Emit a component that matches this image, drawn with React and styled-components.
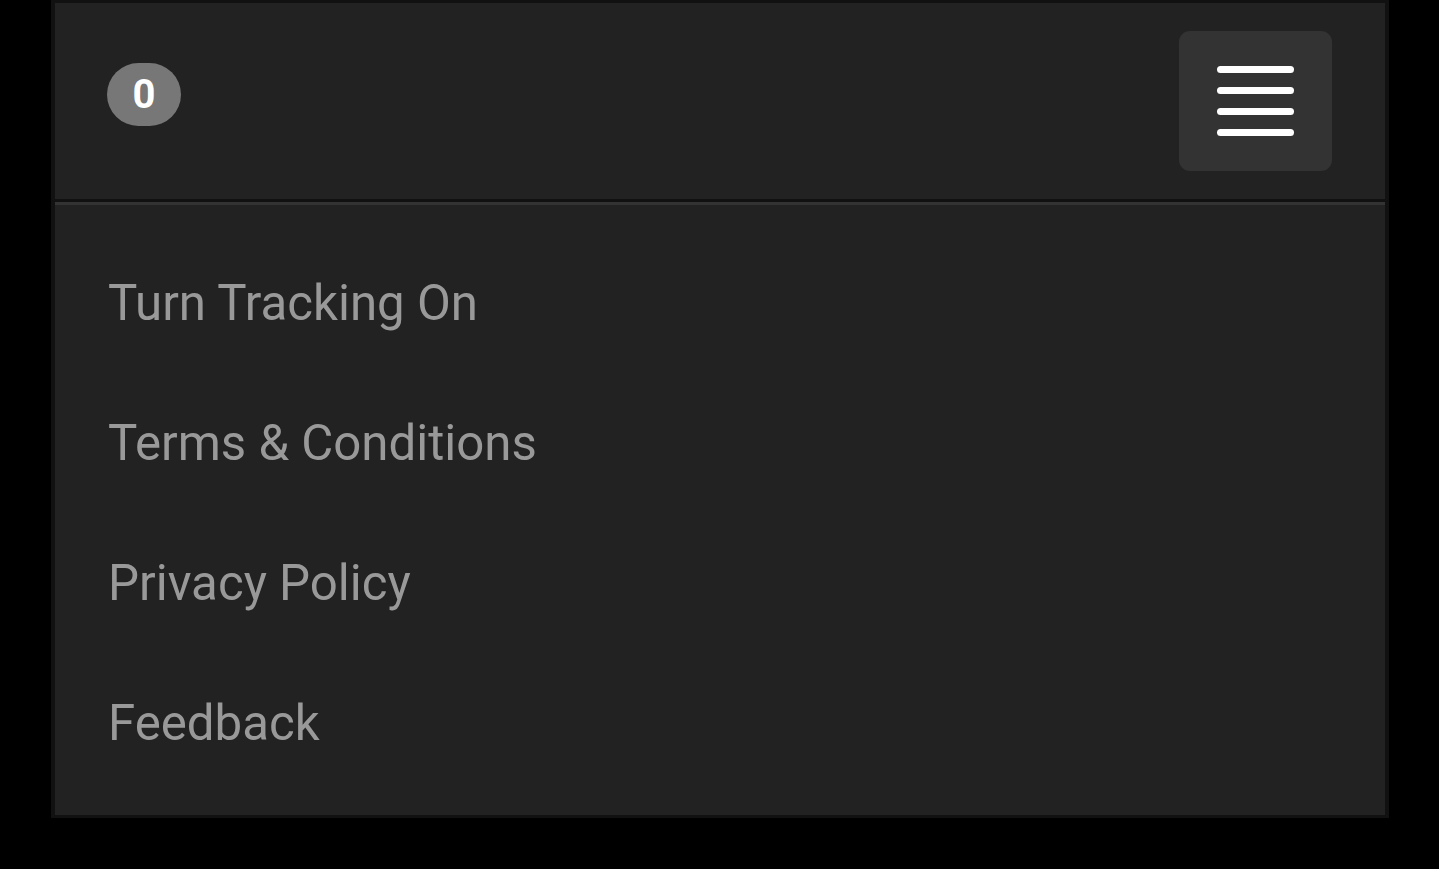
import React from "react";
import styled, { createGlobalStyle } from "styled-components";

const Global = createGlobalStyle`
  html, body {
    margin: 0;
    background: #000;
    font-family: Roboto, "Liberation Sans", sans-serif;
  }
`;

const Page = styled.div`
  padding-left: 51px;
  width: 1338px;
`;

const Panel = styled.div`
  background: #222;
  border: 4px solid #111;
  border-top-width: 3px;
  border-bottom-width: 3px;
`;

const Header = styled.header`
  height: 196px;
  display: flex;
  justify-content: space-between;
  align-items: center;
  padding: 0 53px 0 52px;
  border-bottom: 3px solid #111;
`;

const Badge = styled.span`
  align-self: flex-start;
  margin-top: 60px;
  width: 74px;
  height: 63px;
  border-radius: 32px;
  background: #777;
  color: #fff;
  font-weight: 700;
  font-size: 40px;
  display: flex;
  align-items: center;
  justify-content: center;
`;

const MenuButton = styled.button`
  width: 153px;
  height: 140px;
  border: none;
  border-radius: 11px;
  background: #333;
  display: flex;
  flex-direction: column;
  align-items: center;
  justify-content: center;
  gap: 14px;
  padding: 0;
  cursor: pointer;
`;

const Bar = styled.span`
  width: 77px;
  height: 7px;
  border-radius: 4px;
  background: #fff;
`;

const Menu = styled.nav`
  border-top: 3px solid #333;
  padding: 28px 0 22px 53px;
  display: flex;
  flex-direction: column;
`;

const Item = styled.a`
  height: 140px;
  line-height: 140px;
  font-size: 49.2px;
  color: #999;
  text-decoration: none;
`;

const items = ["Turn Tracking On", "Terms & Conditions", "Privacy Policy", "Feedback"];

export default function App() {
  return (
    <>
      <Global />
      <Page>
        <Panel>
          <Header>
            <Badge>0</Badge>
            <MenuButton aria-label="Menu">
              <Bar />
              <Bar />
              <Bar />
              <Bar />
            </MenuButton>
          </Header>
          <Menu>
            {items.map((t) => (
              <Item key={t} href="#">{t}</Item>
            ))}
          </Menu>
        </Panel>
      </Page>
    </>
  );
}
